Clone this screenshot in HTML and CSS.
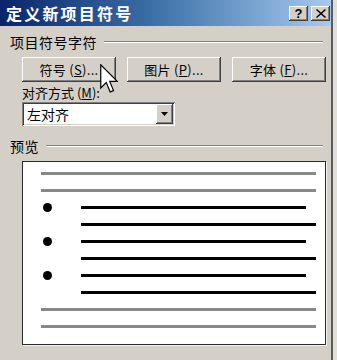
FILE: index.html
```html
<!DOCTYPE html>
<html lang="zh-CN">

<head>
    <meta charset="UTF-8">
    <meta name="viewport" content="width=device-width, initial-scale=1.0">
    <title>定义新项目符号</title>
    <link rel="stylesheet" href="styles.css">
</head>

<body>
    <div class="janela">
        <!-- Barra de título -->
        <div class="titulo">
            <span class="titulo-texto">定义新项目符号</span>
            <div class="titulo-botoes">
                <span class="tb-botao tb-ajuda">?</span>
                <span class="tb-botao tb-fechar">
                    <svg width="10" height="9" viewBox="0 0 10 9">
                        <path d="M1 0 L5 3.5 L9 0 L10 1 L6 4.5 L10 8 L9 9 L5 5.5 L1 9 L0 8 L4 4.5 L0 1 Z" fill="#000" />
                    </svg>
                </span>
            </div>
        </div>

        <div class="conteudo">
            <div class="grupo">
                <span class="grupo-titulo">项目符号字符</span>
                <span class="grupo-linha"></span>
            </div>

            <div class="botoes">
                <button class="botao">符号 (<u>S</u>)...</button>
                <button class="botao">图片 (<u>P</u>)...</button>
                <button class="botao">字体 (<u>F</u>)...</button>
            </div>

            <label class="rotulo">对齐方式 (<u>M</u>):</label>
            <div class="seletor">
                <span class="seletor-valor">左对齐</span>
                <span class="seletor-seta">
                    <svg width="7" height="4" viewBox="0 0 7 4">
                        <path d="M0 0 H7 L3.5 4 Z" fill="#000" />
                    </svg>
                </span>
            </div>

            <div class="grupo grupo-previa">
                <span class="grupo-titulo">预览</span>
                <span class="grupo-linha"></span>
            </div>

            <!-- Pré-visualização -->
            <div class="previa">
                <div class="linha"><span class="traco cinza"></span></div>
                <div class="linha"><span class="traco cinza"></span></div>
                <div class="linha"><span class="marca"><i class="ponto"></i></span><span class="traco curto"></span></div>
                <div class="linha"><span class="marca"></span><span class="traco"></span></div>
                <div class="linha"><span class="marca"><i class="ponto"></i></span><span class="traco curto"></span></div>
                <div class="linha"><span class="marca"></span><span class="traco"></span></div>
                <div class="linha"><span class="marca"><i class="ponto"></i></span><span class="traco curto"></span></div>
                <div class="linha"><span class="marca"></span><span class="traco"></span></div>
                <div class="linha"><span class="traco cinza"></span></div>
                <div class="linha"><span class="traco cinza"></span></div>
            </div>
        </div>

        <!-- Cursor do mouse -->
        <svg class="cursor" width="18" height="30" viewBox="0 0 12 20">
            <path d="M0.5 0.5 L0.5 16 L4.2 12.4 L6.8 18.6 L9 17.7 L6.5 11.6 L11.5 11.6 Z" fill="#fff" stroke="#000" stroke-width="0.8" stroke-linejoin="miter" />
        </svg>
    </div>
</body>

</html>
```

FILE: styles.css
```css
/* Configuração geral */
* {
    box-sizing: border-box;
}

body {
    margin: 0;
    padding: 0;
    background: #e2dfd9;
    font-family: "Noto Sans CJK SC", "Noto Sans", sans-serif;
    color: #000;
    overflow: hidden;
}

.janela {
    position: relative;
    width: 333px;
    height: 360px;
    background: #d4d0c8;
    border-right: 2px solid #5a5a5a;
}

/* Barra de título */
.titulo {
    height: 26px;
    display: flex;
    align-items: center;
    justify-content: space-between;
    padding: 0 1px 0 6px;
    background: linear-gradient(to right, #0a246a 0%, #3a6ea5 45%, #a6caf0 100%);
}

.titulo-texto {
    color: #fff;
    font-size: 16px;
    font-weight: bold;
    letter-spacing: 2.2px;
    line-height: 1;
}

.titulo-botoes {
    display: flex;
    gap: 3px;
}

.tb-botao {
    width: 19px;
    height: 15px;
    display: flex;
    align-items: center;
    justify-content: center;
    background: #d4d0c8;
    box-shadow: inset -1px -1px #404040, inset 1px 1px #fff, inset -2px -2px #808080;
    font-family: "Liberation Sans", sans-serif;
    font-size: 13px;
    font-weight: bold;
    line-height: 1;
}

/* Conteúdo */
.conteudo {
    padding: 6px 8px 0 10px;
}

.grupo {
    display: flex;
    align-items: center;
    gap: 7px;
    height: 20px;
}

.grupo-titulo {
    font-size: 14px;
    letter-spacing: 0.5px;
    line-height: 1;
}

.grupo-linha {
    flex: 1;
    height: 2px;
    border-top: 1px solid #808080;
    border-bottom: 1px solid #fff;
}

.botoes {
    display: grid;
    grid-template-columns: repeat(3, 94px);
    gap: 11px;
    margin: 5px 0 0 12px;
}

.botao {
    height: 25px;
    padding: 0;
    border: none;
    background: #d4d0c8;
    box-shadow: inset -1px -1px #404040, inset 1px 1px #fff, inset -2px -2px #808080;
    font-family: inherit;
    font-size: 13px;
    letter-spacing: 0.3px;
    color: #000;
}

.rotulo {
    display: block;
    margin: 2px 0 0 12px;
    font-size: 13px;
    line-height: 17px;
}

.seletor {
    display: flex;
    align-items: center;
    width: 153px;
    height: 24px;
    margin: 1px 0 0 12px;
    padding: 2px;
    background: #fff;
    box-shadow: inset 1px 1px #808080, inset -1px -1px #fff, inset 2px 2px #404040, inset -2px -2px #d4d0c8;
}

.seletor-valor {
    flex: 1;
    padding-left: 3px;
    font-size: 14px;
    line-height: 1;
}

.seletor-seta {
    width: 17px;
    height: 20px;
    display: flex;
    align-items: center;
    justify-content: center;
    background: #d4d0c8;
    box-shadow: inset -1px -1px #404040, inset 1px 1px #fff, inset -2px -2px #808080;
}

.grupo-previa {
    margin-top: 10px;
}

/* Pré-visualização */
.previa {
    width: 304px;
    height: 184px;
    margin: 5px 0 0 12px;
    padding: 3px 9px 0 18px;
    background: #fff;
    border: 1px solid #2a2a2a;
    box-shadow: 1px 1px #f4f4f4;
}

.linha {
    height: 17px;
    display: flex;
    align-items: center;
}

.marca {
    width: 40px;
    height: 17px;
    display: flex;
    align-items: center;
}

.ponto {
    width: 9px;
    height: 9px;
    margin-left: 2px;
    border-radius: 50%;
    background: #000;
}

.traco {
    flex: 1;
    height: 3px;
    background: #000;
}

.traco.curto {
    margin-right: 10px;
}

.traco.cinza {
    background: #888;
}

/* Cursor sobre o botão */
.cursor {
    position: absolute;
    left: 100px;
    top: 64px;
}
```
